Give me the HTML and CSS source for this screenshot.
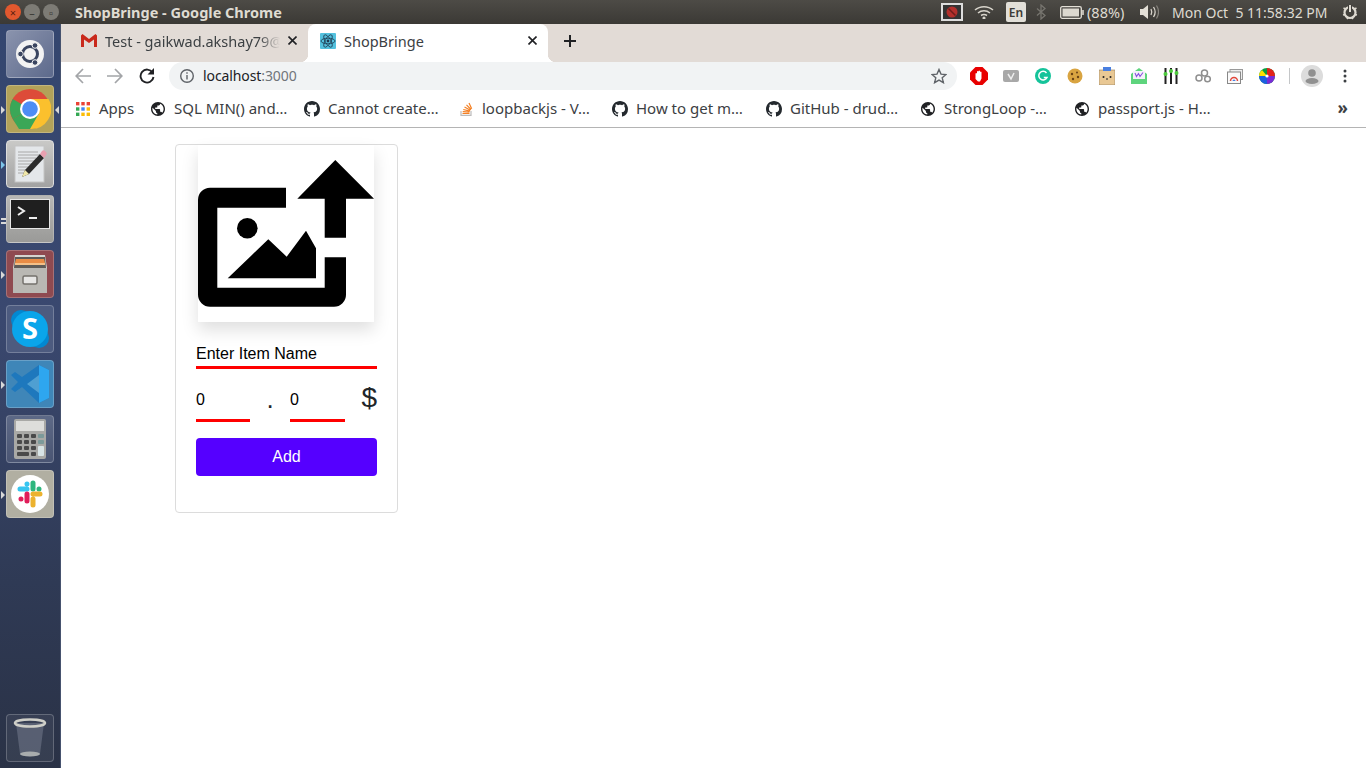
FILE: index.html
```html
<!DOCTYPE html>
<html lang="en">
<head>
<meta charset="UTF-8">
<meta name="viewport" content="width=device-width, initial-scale=1.0">
<title>ShopBringe</title>
<link rel="stylesheet" href="styles.css">
</head>
<body>

<svg class="defs" width="0" height="0">
  <symbol id="github" viewBox="0 0 16 16"><path fill="#24292e" d="M8 0C3.58 0 0 3.58 0 8c0 3.54 2.29 6.53 5.47 7.59.4.07.55-.17.55-.38 0-.19-.01-.82-.01-1.49-2.01.37-2.53-.49-2.69-.94-.09-.23-.48-.94-.82-1.13-.28-.15-.68-.52-.01-.53.63-.01 1.08.58 1.23.82.72 1.21 1.87.87 2.33.66.07-.52.28-.87.51-1.07-1.78-.2-3.64-.89-3.64-3.95 0-.87.31-1.59.82-2.15-.08-.2-.36-1.02.08-2.12 0 0 .67-.21 2.2.82.64-.18 1.32-.27 2-.27.68 0 1.36.09 2 .27 1.53-1.04 2.2-.82 2.2-.82.44 1.1.16 1.92.08 2.12.51.56.82 1.27.82 2.15 0 3.07-1.87 3.75-3.65 3.95.29.25.54.73.54 1.48 0 1.07-.01 1.93-.01 2.2 0 .21.15.46.55.38A8.013 8.013 0 0016 8c0-4.42-3.58-8-8-8z"/></symbol>
  <symbol id="globe" viewBox="2 2 20 20"><path fill="#202124" d="M12 2C6.48 2 2 6.48 2 12s4.48 10 10 10 10-4.48 10-10S17.52 2 12 2zm-1 17.93c-3.95-.49-7-3.85-7-7.93 0-.62.08-1.21.21-1.79L9 15v1c0 1.1.9 2 2 2v1.93zm6.9-2.54c-.26-.81-1-1.39-1.9-1.39h-1v-3c0-.55-.45-1-1-1H8v-2h2c.55 0 1-.45 1-1V7h2c1.1 0 2-.9 2-2v-.41c2.93 1.19 5 4.06 5 7.41 0 2.08-.8 3.97-2.1 5.39z"/></symbol>
</svg>

<!-- Ubuntu panel -->
<div class="panel">
  <div class="win-buttons">
    <span class="win-btn win-close">×</span>
    <span class="win-btn">–</span>
    <span class="win-btn">▫</span>
  </div>
  <div class="panel-title">ShopBringe - Google Chrome</div>
  <div class="indicators">
    <svg class="ind-rec" width="22" height="18" viewBox="0 0 22 18"><rect x="1" y="1" width="20" height="16" fill="#333" stroke="#ddd" stroke-width="2"/><circle cx="11" cy="9" r="5.5" fill="#b3302c"/><path d="M7.5 5.5l7 7" stroke="#6e1d1a" stroke-width="1.5"/></svg>
    <svg class="ind-wifi" width="20" height="14" viewBox="0 0 20 14" fill="none" stroke="#d8d4cb" stroke-width="1.5"><path d="M1 5c5-4.500 13-4.500 18 0"/><path d="M4 8c3.500-3 8.500-3 12 0"/><path d="M7 10.500c2-1.300 4-1.300 6 0"/><circle cx="10" cy="13" r=".8" fill="#d8d4cb"/></svg>
    <span class="ind-lang">En</span>
    <svg class="ind-bt" width="10" height="16" viewBox="0 0 10 16" fill="none" stroke="#77756f" stroke-width="1.300"><path d="M1 4.500l8 7-4 3.500V1l4 3.500-8 7"/></svg>
    <svg class="ind-bat" width="24" height="13" viewBox="0 0 24 13"><rect x=".7" y=".7" width="20.600" height="11.600" rx="1.500" fill="none" stroke="#e3dfd6" stroke-width="1.300"/><rect x="2.500" y="2.500" width="16.500" height="8" fill="#dcd8cf"/><rect x="22" y="4" width="2" height="5" fill="#bcb8b0"/></svg>
    <span class="ind-pct">(88%)</span>
    <svg class="ind-vol" width="19" height="16" viewBox="0 0 19 16"><path d="M0 5h3l5-4v14l-5-4H0z" fill="#e3dfd6"/><path d="M11 5c1 2 1 4 0 6M13.500 3c2 3 2 7 0 10" fill="none" stroke="#d8d4cb" stroke-width="1.300"/><path d="M16.500 1.500c2.500 4 2.500 9 0 13" fill="none" stroke="#87847d" stroke-width="1.200"/></svg>
    <span class="ind-time">Mon Oct  5 11:58:32 PM</span>
    <svg class="ind-power" width="16" height="16" viewBox="0 0 16 16"><circle cx="8" cy="8.500" r="5.500" fill="none" stroke="#dfdbd2" stroke-width="2.200"/><path d="M8 1v7" stroke="#3f3d39" stroke-width="4"/><path d="M8 1v7" stroke="#dfdbd2" stroke-width="2"/><path d="M1.500 4l2 1M14.500 4l-2 1M1 11l2-.5M15 11l-2-.5M5 15l1-1.500M11 15l-1-1.500" stroke="#dfdbd2" stroke-width="1.500"/></svg>
  </div>
</div>

<div class="desktop">

  <!-- Launcher -->
  <div class="dock">
    <div class="tile tile-ubuntu">
      <svg width="34" height="34" viewBox="0 0 34 34"><circle cx="17" cy="17" r="14" fill="#f3f3f3"/><circle cx="17" cy="17" r="7.500" fill="none" stroke="#3a4560" stroke-width="3"/><circle cx="7.500" cy="17" r="2.800" fill="#3a4560" stroke="#f3f3f3"/><circle cx="22" cy="8.500" r="2.800" fill="#3a4560" stroke="#f3f3f3"/><circle cx="22" cy="25.500" r="2.800" fill="#3a4560" stroke="#f3f3f3"/></svg>
    </div>
    <div class="tile tile-chrome">
      <span class="pip pip-left"></span><span class="pip pip-right"></span>
      <svg width="42" height="42" viewBox="0 0 42 42"><circle cx="21" cy="21" r="20" fill="#dd4b39"/><path d="M21 21L3.700 31A20 20 0 0 1 3.700 11z" fill="#3aa757"/><path d="M21 21L38.300 31A20 20 0 0 1 21 41L10 41 3.700 31z" fill="#3aa757"/><path d="M21 11H39.500A20 20 0 0 1 21 41L29.700 26z" fill="#fbc02d"/><circle cx="21" cy="21" r="10" fill="#fff"/><circle cx="21" cy="21" r="7.800" fill="#4d8df5"/></svg>
    </div>
    <div class="tile tile-editor">
      <span class="pip pip-blue"></span>
      <svg width="40" height="40" viewBox="0 0 40 40"><rect x="5" y="2" width="29" height="36" fill="#e4e7ea" stroke="#c4c4c4"/><path d="M8 8h20M8 11h22M8 14h18M8 17h20M8 20h14M8 23h12M8 26h9M8 29h6" stroke="#a8a8a8"/><path d="M12 33l3-7 15-16 4 4-15 16z" fill="#2b2b2b"/><path d="M30 10l2-3c1-1 2-1 3 0l1 1c1 1 1 2 0 3l-2 3z" fill="#e8a0b0"/><path d="M12 33l3-7 4 4z" fill="#efe6a8"/></svg>
    </div>
    <div class="tile tile-term">
      <span class="pip pip-double"></span>
      <div class="term-screen">
        <svg width="24" height="14" viewBox="0 0 24 14" fill="none" stroke="#eee" stroke-width="2"><path d="M1 1l6 4-6 4"/><path d="M12 12h8"/></svg>
      </div>
    </div>
    <div class="tile tile-files">
      <span class="pip"></span>
      <svg width="36" height="40" viewBox="0 0 36 40"><path d="M3 1h30l2 13v24a1 1 0 0 1-1 1H2a1 1 0 0 1-1-1V14z" fill="#d6d5d0"/><path d="M3 3h30l1 11H2z" fill="#5f5c58"/><path d="M4 5h28l1 4H3z" fill="#e98c45"/><path d="M3 9h30v2H3z" fill="#f4c088"/><rect x="1" y="14" width="34" height="25" rx="1" fill="#b9b8b3"/><rect x="11" y="22" width="14" height="8" rx="1.500" fill="#e6e6e4" stroke="#74716c" stroke-width="1.500"/></svg>
    </div>
    <div class="tile tile-skype">
      <svg width="42" height="42" viewBox="0 0 42 42"><circle cx="12" cy="12" r="10" fill="#0288d1"/><circle cx="30" cy="30" r="10" fill="#0288d1"/><circle cx="21" cy="21" r="18" fill="#0aa5ea"/><text x="21" y="31" class="skype-s">S</text></svg>
    </div>
    <div class="tile tile-code">
      <span class="pip"></span>
      <svg width="40" height="40" viewBox="0 0 40 40"><path d="M29 1l10 5v28l-10 5-17-16-7 5-4-3 7-7-7-7 4-3 7 5z" fill="#1e78bd"/><path d="M29 1l10 5v28l-10 5z" fill="#2ea6ef"/><path d="M29 11L17 20l12 9z" fill="#4f9fd2"/></svg>
    </div>
    <div class="tile tile-calc">
      <svg width="34" height="42" viewBox="0 0 34 42"><rect x="1" y="1" width="32" height="40" rx="2" fill="#a9a9a6"/><rect x="3" y="3" width="28" height="10" fill="#dededb"/><g fill="#4a4a4a"><rect x="4" y="16" width="5" height="4" rx="1"/><rect x="11" y="16" width="5" height="4" rx="1"/><rect x="18" y="16" width="5" height="4" rx="1"/><rect x="4" y="22" width="5" height="4" rx="1"/><rect x="11" y="22" width="5" height="4" rx="1"/><rect x="18" y="22" width="5" height="4" rx="1"/><rect x="4" y="28" width="5" height="4" rx="1"/><rect x="11" y="28" width="5" height="4" rx="1"/><rect x="18" y="28" width="5" height="4" rx="1"/><rect x="4" y="34" width="12" height="4" rx="1"/><rect x="18" y="34" width="5" height="4" rx="1"/></g><rect x="25" y="16" width="6" height="4" rx="1" fill="#7c9a9a"/><rect x="25" y="22" width="6" height="4" rx="1" fill="#7c9a9a"/><rect x="25" y="28" width="6" height="10" rx="1" fill="#d8e4e6"/></svg>
    </div>
    <div class="tile tile-slack">
      <span class="pip"></span>
      <svg width="38" height="38" viewBox="0 0 38 38"><circle cx="19" cy="19" r="19" fill="#fff"/><g stroke-width="5" stroke-linecap="round" fill="none"><path d="M16 9v0M16 14H9" stroke="#36c5f0"/><path d="M22 14V8M28 14h0" stroke="#2eb67d"/><path d="M22 24v6M22 19h7" stroke="#ecb22e"/><path d="M16 19v7M10 24h0" stroke="#e01e5a"/></g></svg>
    </div>
    <div class="tile tile-trash">
      <svg width="36" height="42" viewBox="0 0 36 42"><path d="M4 6l4 31c4 3 16 3 20 0l4-31z" fill="#8a92a3" fill-opacity=".4"/><ellipse cx="18" cy="6" rx="15" ry="3.500" fill="none" stroke="#cfcfc8" stroke-width="2.500"/><ellipse cx="18" cy="37" rx="10" ry="2.500" fill="#a9adae"/></svg>
    </div>
  </div>

  <div class="browser">

    <!-- Tabs -->
    <div class="tabstrip">
      <div class="tab">
        <svg class="tab-icon" width="16" height="13" viewBox="0 0 16 13"><path d="M0 1.500V13h3V5.500L8 9l5-3.500V13h3V1.500L14.500 0 8 5 1.500 0z" fill="#c9291c"/></svg>
        <span class="tab-title tab-fade">Test - gaikwad.akshay79@</span>
        <svg class="tab-close" width="9" height="9" viewBox="0 0 9 9"><path d="M.5.5l8 8M8.500.5l-8 8" stroke="#202124" stroke-width="1.600"/></svg>
      </div>
      <div class="tab tab-active">
        <svg class="tab-icon" width="16" height="16" viewBox="0 0 16 16"><rect width="16" height="16" rx="1" fill="#53c1de"/><g fill="none" stroke="#1d3a50" stroke-width=".8"><ellipse cx="8" cy="8" rx="7" ry="2.800"/><ellipse cx="8" cy="8" rx="7" ry="2.800" transform="rotate(60 8 8)"/><ellipse cx="8" cy="8" rx="7" ry="2.800" transform="rotate(120 8 8)"/></g><circle cx="8" cy="8" r="1.400" fill="#1d3a50"/></svg>
        <span class="tab-title">ShopBringe</span>
        <svg class="tab-close" width="9" height="9" viewBox="0 0 9 9"><path d="M.5.5l8 8M8.500.5l-8 8" stroke="#202124" stroke-width="1.600"/></svg>
      </div>
      <svg class="new-tab" width="12" height="12" viewBox="0 0 12 12"><path d="M6 0v12M0 6h12" stroke="#202124" stroke-width="2"/></svg>
    </div>

    <!-- Address bar -->
    <div class="toolbar">
      <svg class="nav nav-back" width="16" height="16" viewBox="0 0 16 16" fill="none" stroke="#a3a5a8" stroke-width="1.700"><path d="M16 8H1.500M8 1L1.200 8 8 15"/></svg>
      <svg class="nav nav-forward" width="16" height="16" viewBox="0 0 16 16" fill="none" stroke="#a3a5a8" stroke-width="1.700"><path d="M0 8h14.500M8 1l6.800 7L8 15"/></svg>
      <svg class="nav nav-reload" width="16" height="16" viewBox="0 0 16 16"><path d="M13.500 4.500A6.500 6.500 0 1 0 14.500 9" fill="none" stroke="#202124" stroke-width="1.900"/><path d="M15 0v6.500H8.500z" fill="#202124"/></svg>
      <div class="omnibox">
        <svg width="16" height="16" viewBox="0 0 16 16" fill="none" stroke="#5f6368" stroke-width="1.400"><circle cx="8" cy="8" r="6.300"/><path d="M8 7v4.500M8 4.200v1.500"/></svg>
        <span class="url"><span class="url-host">localhost</span>:3000</span>
        <svg class="star" width="16" height="16" viewBox="0 0 16 16"><path d="M8 1.500l2 4.600 5 .4-3.800 3.300 1.200 4.900L8 12.100l-4.400 2.600 1.200-4.900L1 6.500l5-.4z" fill="none" stroke="#5f6368" stroke-width="1.400"/></svg>
      </div>
      <div class="extensions">
        <svg width="18" height="18" viewBox="0 0 18 18"><path d="M5.500 0h7L18 5.500v7L12.500 18h-7L0 12.500v-7z" fill="#e80000"/><path d="M5.500 12V6.500a1 1 0 0 1 1.500 0V4.500a1 1 0 0 1 1.500 0V4a1 1 0 0 1 1.500 0v1a1 1 0 0 1 1.500 0v6.500L10 14.500H8z" fill="#fff"/></svg>
        <svg width="16" height="12" viewBox="0 0 16 12"><rect width="16" height="12" rx="2" fill="#a8a8a8"/><path d="M5 4l3 5 3-6" fill="none" stroke="#eee" stroke-width="1.500"/></svg>
        <svg width="16" height="16" viewBox="0 0 16 16"><circle cx="8" cy="8" r="8" fill="#15c39a"/><path d="M11.500 5A4.300 4.300 0 1 0 12 9.500H8.800" fill="none" stroke="#fff" stroke-width="1.500"/></svg>
        <svg width="16" height="16" viewBox="0 0 16 16"><circle cx="8" cy="8" r="7.500" fill="#d9a441"/><g fill="#6b4315"><circle cx="5" cy="6" r="1.200"/><circle cx="10" cy="4.500" r="1"/><circle cx="11" cy="9" r="1.200"/><circle cx="6" cy="11" r="1.200"/></g></svg>
        <svg width="16" height="18" viewBox="0 0 16 18"><rect y="3" width="16" height="15" fill="#e9c894" stroke="#8d7a5c" stroke-width=".6"/><rect x="4" width="8" height="4" fill="#4a7fe0"/><circle cx="4.500" cy="10" r="1" fill="#222"/><circle cx="11.500" cy="10" r="1" fill="#222"/><path d="M7 12h2" stroke="#222"/></svg>
        <svg width="16" height="16" viewBox="0 0 16 16"><path d="M0 6l8-6 8 6v10H0z" fill="#5ed47d"/><rect x="2" y="3" width="12" height="8" fill="#f4f2fa"/><path d="M4 5l1.500 3.500L7.500 5.500 9 8.500 12 4.500" fill="none" stroke="#8a52e0" stroke-width="1.100"/></svg>
        <svg width="16" height="16" viewBox="0 0 16 16"><path d="M2.500 0v16M8 0v16M13.500 0v16" stroke="#222" stroke-width="2"/><circle cx="2.500" cy="6" r="2" fill="#4ccb3c"/><circle cx="8" cy="3" r="2" fill="#4ccb3c"/><circle cx="13.500" cy="5" r="2" fill="#4ccb3c"/></svg>
        <svg width="16" height="14" viewBox="0 0 16 14" fill="none" stroke="#8f8f8f" stroke-width="1.500"><circle cx="4" cy="9" r="3"/><circle cx="9.500" cy="4" r="3"/><circle cx="12.500" cy="10" r="2.800"/></svg>
        <svg width="16" height="15" viewBox="0 0 16 15"><rect x="3" y=".5" width="12.500" height="10" fill="#eee" stroke="#999"/><rect x=".5" y="3" width="13" height="11.500" fill="#fafafa" stroke="#888"/><path d="M3.500 12a3.500 3.500 0 0 1 7 0" fill="none" stroke="#e0463a" stroke-width="1.500"/><path d="M5.500 12a1.500 1.500 0 0 1 3 0" fill="#4a7fe0"/></svg>
        <svg width="16" height="16" viewBox="0 0 16 16"><circle cx="8" cy="8" r="8" fill="#0b9e3f"/><path d="M8 8L8 0A8 8 0 0 1 16 8z" fill="#e2231a"/><path d="M8 8L16 8A8 8 0 0 1 8 16z" fill="#7a2bd6"/><path d="M8 8L8 16A8 8 0 0 1 0 8z" fill="#1d5fe0"/><path d="M8 8L0 8A8 8 0 0 1 3 2z" fill="#ffe000"/><circle cx="8" cy="8" r="1.600" fill="#fff"/></svg>
      </div>
      <span class="toolbar-sep"></span>
      <svg class="avatar" width="22" height="22" viewBox="0 0 22 22"><circle cx="11" cy="11" r="11" fill="#dcdcdc"/><circle cx="11" cy="8" r="3.800" fill="#909090"/><ellipse cx="11" cy="16" rx="6.500" ry="3" fill="#909090"/></svg>
      <svg class="menu" width="4" height="14" viewBox="0 0 4 14" fill="#3c4043"><circle cx="2" cy="2" r="1.500"/><circle cx="2" cy="7" r="1.500"/><circle cx="2" cy="12" r="1.500"/></svg>
    </div>

    <!-- Bookmarks -->
    <div class="bookmarks">
      <div class="bm-apps">
        <svg width="14" height="14" viewBox="0 0 14 14"><rect width="3.400" height="3.400" fill="#ea4335"/><rect x="5.300" width="3.400" height="3.400" fill="#ea4335"/><rect x="10.600" width="3.400" height="3.400" fill="#ea4335"/><rect y="5.300" width="3.400" height="3.400" fill="#34a853"/><rect x="5.300" y="5.300" width="3.400" height="3.400" fill="#4285f4"/><rect x="10.600" y="5.300" width="3.400" height="3.400" fill="#fbbc05"/><rect y="10.600" width="3.400" height="3.400" fill="#34a853"/><rect x="5.300" y="10.600" width="3.400" height="3.400" fill="#fbbc05"/><rect x="10.600" y="10.600" width="3.400" height="3.400" fill="#fbbc05"/></svg>
        <span>Apps</span>
      </div>
      <div class="bm"><svg class="bm-icon" viewBox="0 0 14 14"><use href="#globe"/></svg><span>SQL MIN() and…</span></div>
      <div class="bm"><svg class="bm-icon bm-gh" viewBox="0 0 16 16"><use href="#github"/></svg><span>Cannot create…</span></div>
      <div class="bm"><svg class="bm-icon" viewBox="0 0 14 14"><path d="M2 9v4.300h10V9" fill="none" stroke="#bcbbbb" stroke-width="1.200"/><path d="M3.500 11.500h7M3.700 9.600l6.800.6M4.300 7.500l6.600 1.700M5.500 5l5.900 3.300M7.500 2.800l4.500 4.700M10 1l2.700 5.800" stroke="#f48024" stroke-width="1.200"/></svg><span>loopbackjs - V…</span></div>
      <div class="bm"><svg class="bm-icon bm-gh" viewBox="0 0 16 16"><use href="#github"/></svg><span>How to get m…</span></div>
      <div class="bm"><svg class="bm-icon bm-gh" viewBox="0 0 16 16"><use href="#github"/></svg><span>GitHub - drud…</span></div>
      <div class="bm"><svg class="bm-icon" viewBox="0 0 14 14"><use href="#globe"/></svg><span>StrongLoop -…</span></div>
      <div class="bm"><svg class="bm-icon" viewBox="0 0 14 14"><use href="#globe"/></svg><span>passport.js - H…</span></div>
      <span class="bm-more">»</span>
    </div>

    <!-- Page -->
    <div class="page">
      <div class="card">
        <div class="upload-box">
          <svg width="176" height="177" viewBox="0 0 176 177">
            <path d="M88 42.700H12a12 12 0 0 0-12 12V149.700a12 12 0 0 0 12 12H136a12 12 0 0 0 12-12V112.300H126.700V142.700H19.300V62.700H88z"/>
            <path d="M137.300 15L176 53.700H148V92.700H126.700V53.700H99.300z"/>
            <circle cx="49.300" cy="83.300" r="10.300"/>
            <path d="M29.700 133.300L70.300 94.300 88.700 111.700 108 85.700 118 103.300V133.300z"/>
          </svg>
        </div>
        <input class="field field-name" type="text" placeholder="Enter Item Name">
        <div class="price-row">
          <input class="field field-price" type="text" value="0">
          <span class="dot">.</span>
          <input class="field field-price field-cents" type="text" value="0">
          <span class="dollar">$</span>
        </div>
        <button class="add-btn">Add</button>
      </div>
    </div>

  </div>
</div>

</body>
</html>
```

FILE: styles.css
```css
* {
box-sizing: border-box;
}

html, body {
margin: 0;
height: 768px;
overflow: hidden;
}

body {
display: flex;
flex-direction: column;
background-color: #fff;
font-family: "Noto Sans", sans-serif;
}

.defs {
display: block;
height: 0;
}

/* top panel */
.panel {
display: flex;
align-items: center;
flex: 0 0 24px;
background: linear-gradient(#4d4b46, #3b3935);
color: #dfdbd2;
}

.win-buttons {
display: flex;
gap: 3px;
margin-left: 5px;
}

.win-btn {
display: flex;
align-items: center;
justify-content: center;
width: 16px;
height: 16px;
border-radius: 50%;
background-color: #7d7b75;
color: #3a3935;
font-size: 11px;
line-height: 1;
}

.win-close {
background-color: #e2582e;
color: #5d2010;
}

.panel-title {
margin-left: 16px;
font-size: 14.5px;
font-weight: 700;
}

.indicators {
display: flex;
align-items: center;
margin-left: auto;
padding-right: 8px;
font-size: 14px;
}

.ind-wifi { margin-left: 11px; }
.ind-bt { margin-left: 10px; }
.ind-bat { margin-left: 14px; }
.ind-vol { margin-left: 12px; }
.ind-power { margin-left: 13px; }

.ind-lang {
display: flex;
align-items: center;
justify-content: center;
width: 20px;
height: 20px;
margin-left: 12px;
border-radius: 2px;
background-color: #e2dfd8;
color: #3c3b37;
font-size: 12px;
font-weight: 600;
}

.ind-pct {
width: 41px;
margin-left: 3px;
font-size: 14.5px;
}

.ind-time {
width: 157px;
margin-left: 13px;
white-space: pre;
}

.desktop {
display: flex;
flex: 1;
min-height: 0;
}

/* launcher */
.dock {
display: flex;
flex-direction: column;
flex: 0 0 61px;
gap: 7px;
padding: 6px 0 6px 6px;
background: linear-gradient(#34466f, #3a486f 40%, #2f3a55 75%, #2a3246);
border-right: 1px solid #46526e;
}

.tile {
position: relative;
display: flex;
align-items: center;
justify-content: center;
flex: 0 0 48px;
width: 48px;
border-radius: 4px;
border: 1px solid rgba(255, 255, 255, 0.22);
background-color: rgba(255, 255, 255, 0.15);
}

.tile-ubuntu { background: linear-gradient(135deg, #8a93ad, #5d6a8c); }
.tile-chrome { background-color: #b2a259; }
.tile-editor { background: linear-gradient(#c9c9c7, #a2a2a2); border-color: #ddd; }
.tile-term { align-items: flex-start; padding-top: 3px; background: linear-gradient(#b8b8b6, #9a9a98); }
.tile-files { background-color: #8f4a50; }
.tile-skype { background-color: #4d5b7f; }
.tile-code { background-color: #3f86b8; }
.tile-calc { background: linear-gradient(#5d6986, #4a5573); }
.tile-slack { background-color: #b1afa2; }

.tile-trash {
margin-top: auto;
background-color: rgba(255, 255, 255, 0.06);
}

.term-screen {
display: flex;
padding: 6px 0 0 6px;
width: 40px;
height: 30px;
background-color: #1f1f1f;
border: 1px solid #e6e6e6;
}

.skype-s {
fill: #fff;
font-family: "Open Sans", sans-serif;
font-size: 29px;
font-weight: 700;
text-anchor: middle;
}

.pip {
position: absolute;
top: 20px;
left: -6px;
width: 0;
height: 0;
border: 4px solid transparent;
border-left: 4px solid #d8d8d8;
}

.pip-blue {
border-left-color: #7cc4ea;
}

.pip-left {
left: -6px;
}

.pip-right {
left: auto;
right: -6px;
border-left-color: transparent;
border-right: 4px solid #d8d8d8;
}

.pip-double {
top: 22px;
left: -6px;
width: 5px;
height: 6px;
border: 0;
border-top: 2px solid #d8d8d8;
border-bottom: 2px solid #d8d8d8;
}

/* chrome */
.browser {
display: flex;
flex-direction: column;
flex: 1;
min-width: 0;
}

.tabstrip {
display: flex;
align-items: center;
flex: 0 0 38px;
background-color: #e2dbd6;
}

.tab {
display: flex;
align-items: center;
flex: none;
width: 240px;
height: 38px;
margin-left: 7px;
padding: 0 11px 5px 13px;
font-size: 14.5px;
line-height: 20px;
color: #3c4043;
}

.tab-active {
position: relative;
margin-left: 0;
padding-left: 12px;
background-color: #fff;
border-radius: 8px 8px 0 0;
}

.tab-active::before,
.tab-active::after {
content: "";
position: absolute;
bottom: 0;
width: 8px;
height: 8px;
}

.tab-active::before {
left: -8px;
background: radial-gradient(circle at 0 0, transparent 8px, #fff 8.5px);
}

.tab-active::after {
right: -8px;
background: radial-gradient(circle at 100% 0, transparent 8px, #fff 8.5px);
}

.tab-icon {
flex: none;
}

.tab-title {
flex: 1;
min-width: 0;
margin-left: 8px;
white-space: nowrap;
}

.tab-fade {
-webkit-mask-image: linear-gradient(to right, #000 88%, transparent 100%);
mask-image: linear-gradient(to right, #000 88%, transparent 100%);
}

.tab-close {
flex: none;
margin-left: 8px;
}

.new-tab {
margin: 0 0 4px 16px;
}

.toolbar {
display: flex;
align-items: center;
flex: 0 0 29px;
padding-bottom: 1px;
background-color: #fff;
}

.nav-back { margin-left: 14px; }
.nav-forward { margin-left: 16px; }
.nav-reload { margin-left: 16px; }

.omnibox {
display: flex;
align-items: center;
flex: 0 0 788px;
height: 28px;
margin-left: 14px;
padding: 0 10px;
border-radius: 14px;
background-color: #f1f3f4;
font-size: 14px;
letter-spacing: -0.1px;
color: #70757a;
}

.url {
margin-left: 8px;
margin-bottom: 2px;
}

.url-host {
color: #202124;
}

.star {
margin-left: auto;
}

.extensions {
display: grid;
grid-template-columns: repeat(10, 32px);
align-items: center;
justify-items: center;
flex: none;
margin-left: 6px;
}

.toolbar-sep {
flex: none;
width: 1px;
height: 16px;
margin-left: 6px;
background-color: #c4c6c8;
}

.avatar { flex: none; margin-left: 11px; }
.menu { flex: none; margin-left: 20px; }

.bookmarks {
display: flex;
align-items: center;
flex: 0 0 37px;
padding: 0 0 1px 15px;
background-color: #fff;
border-bottom: 1px solid #b4b4b4;
font-size: 15px;
color: #3c4043;
white-space: nowrap;
}

.bm-apps {
display: flex;
align-items: center;
gap: 9px;
flex: 0 0 75px;
}

.bm {
display: flex;
align-items: center;
gap: 9px;
flex: 0 0 154px;
}

.bookmarks span {
margin-bottom: 2px;
}

.bm-icon {
flex: none;
width: 14px;
height: 14px;
}

.bm-gh {
width: 16px;
height: 16px;
margin-left: -1px;
margin-right: -1px;
}

.bm-more {
margin-left: auto;
margin-right: 18px;
font-size: 17px;
font-weight: 700;
}

/* shopbringe page */
.page {
flex: 1;
background-color: #fff;
}

.card {
width: 223px;
margin: 16px 0 0 114px;
padding: 0 20px 36px;
border: 1px solid #dcdcdc;
border-radius: 4px;
}

.upload-box {
width: 176px;
height: 177px;
margin-left: 2px;
background-color: #fff;
box-shadow: 0 8px 16px rgba(0, 0, 0, 0.13);
}

.upload-box svg {
display: block;
}

.field {
display: block;
border: 0;
border-bottom: 3px solid #f00;
outline: none;
padding: 0;
font-family: "Liberation Sans", sans-serif;
font-size: 16px;
color: #000;
background: transparent;
}

.field::placeholder {
color: #000;
opacity: 1;
}

.field-name {
width: 100%;
height: 31px;
margin-top: 16px;
padding-top: 4px;
}

.price-row {
display: flex;
align-items: center;
margin-top: 11px;
font-family: "Liberation Sans", sans-serif;
color: #212529;
}

.field-price {
width: 54px;
height: 42px;
}

.field-cents {
width: 55px;
}

.dot {
flex: 0 0 40px;
padding-bottom: 4px;
font-size: 26px;
text-align: center;
}

.dollar {
margin-left: auto;
padding-bottom: 6px;
font-size: 28px;
}

.add-btn {
display: block;
width: 100%;
height: 38px;
margin-top: 16px;
border: none;
border-radius: 4px;
background-color: #50f;
color: #fff;
font-family: "Liberation Sans", sans-serif;
font-size: 16px;
}
```
